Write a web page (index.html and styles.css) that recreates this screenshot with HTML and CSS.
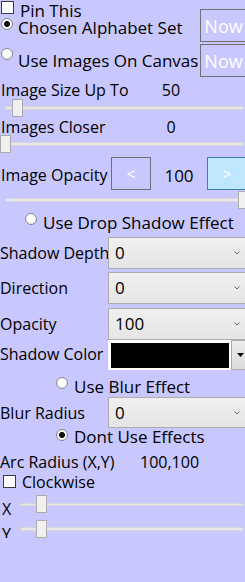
FILE: index.html
```html
<!DOCTYPE html>
<html lang="en">
<head>
    <meta charset="UTF-8">
    <meta name="viewport" content="width=device-width, initial-scale=1.0">
    <title>Effects Panel</title>
    <link rel="stylesheet" href="styles.css">
</head>
<body>
    <div class="panel">
        <div class="top">
            <div class="choices">
                <div class="pin"><span class="box"></span><span class="text">Pin This</span></div>
                <div class="option first"><span class="radio on"></span><span class="text">Chosen Alphabet Set</span></div>
                <div class="option second"><span class="radio"></span><span class="text">Use Images On Canvas</span></div>
            </div>
            <div class="now-col">
                <button class="now">Now</button>
                <button class="now">Now</button>
            </div>
        </div>

        <div class="readout first-readout"><span class="name">Image Size Up To</span><span class="value">50</span></div>
        <div class="slider"><div class="track"></div><div class="thumb" style="left: 12px"></div></div>

        <div class="readout"><span class="name">Images Closer</span><span class="value">0</span></div>
        <div class="slider"><div class="track"></div><div class="thumb" style="left: 0px"></div></div>

        <div class="stepper">
            <span class="name">Image Opacity</span>
            <button class="step">&lt;</button>
            <span class="value">100</span>
            <button class="step active">&gt;</button>
        </div>
        <div class="slider"><div class="track"></div><div class="thumb" style="left: 238px"></div></div>

        <div class="effect shadow-effect"><span class="radio"></span><span class="text">Use Drop Shadow Effect</span></div>

        <div class="field"><span class="name">Shadow Depth</span><div class="select"><span>0</span><svg width="6" height="4" viewBox="0 0 6 4"><polyline points="0.5,0.5 3,3 5.5,0.5" fill="none" stroke="#6a6a6a" stroke-width="1"/></svg></div></div>
        <div class="field direction"><span class="name">Direction</span><div class="select"><span>0</span><svg width="6" height="4" viewBox="0 0 6 4"><polyline points="0.5,0.5 3,3 5.5,0.5" fill="none" stroke="#6a6a6a" stroke-width="1"/></svg></div></div>
        <div class="field opacity"><span class="name">Opacity</span><div class="select"><span>100</span><svg width="6" height="4" viewBox="0 0 6 4"><polyline points="0.5,0.5 3,3 5.5,0.5" fill="none" stroke="#6a6a6a" stroke-width="1"/></svg></div></div>
        <div class="field color-field">
            <span class="name">Shadow Color</span>
            <div class="color-pick">
                <div class="swatch"></div>
                <div class="drop"><svg width="7" height="4" viewBox="0 0 7 4"><polygon points="0,0 7,0 3.5,4" fill="#000"/></svg></div>
            </div>
        </div>

        <div class="effect blur-effect"><span class="radio"></span><span class="text">Use Blur Effect</span></div>

        <div class="field blur"><span class="name">Blur Radius</span><div class="select"><span>0</span><svg width="6" height="4" viewBox="0 0 6 4"><polyline points="0.5,0.5 3,3 5.5,0.5" fill="none" stroke="#6a6a6a" stroke-width="1"/></svg></div></div>

        <div class="effect none-effect"><span class="radio on"></span><span class="text">Dont Use Effects</span></div>

        <div class="arc"><span class="name">Arc Radius (X,Y)</span><span>100,100</span></div>
        <div class="clockwise"><span class="box"></span><span>Clockwise</span></div>

        <div class="axis x-axis"><span class="axis-name">X</span><div class="axis-slider"><div class="track"></div><div class="thumb" style="left: 16px"></div></div></div>
        <div class="axis y-axis"><span class="axis-name">Y</span><div class="axis-slider"><div class="track"></div><div class="thumb" style="left: 16px"></div></div></div>
    </div>
</body>
</html>
```

FILE: styles.css
```css
* {
    box-sizing: border-box;
}
body {
    margin: 0;
    background: #c8c8ff;
    font-family: "Open Sans", sans-serif;
    font-size: 16px;
    line-height: 20px;
    color: #000;
    overflow: hidden;
}
.panel {
    width: 250px;
}
.top {
    display: flex;
    height: 78px;
}
.choices {
    width: 200px;
    white-space: nowrap;
}
.text {
    font-size: 17px;
}
.pin {
    display: flex;
    height: 19px;
    padding: 1px 0 0 1px;
}
.pin .text {
    line-height: 17px;
    margin-top: 1px;
}
.box {
    width: 13px;
    height: 13px;
    border: 1px solid #3a3a3a;
    background: #fff;
    flex-shrink: 0;
}
.pin .box {
    margin-right: 6px;
}
.radio {
    width: 12px;
    height: 12px;
    border-radius: 50%;
    border: 1px solid #8a8a8a;
    background: radial-gradient(circle at 50% 40%, #fff 40%, #e4e4e4);
    flex-shrink: 0;
}
.radio.on {
    background: radial-gradient(circle, #111 0 2.6px, #fff 3.4px, #fff 45%, #e4e4e4);
}
.option {
    display: flex;
    padding-left: 1px;
}
.option .radio {
    margin-right: 5px;
}
.option.first {
    height: 30px;
    margin-top: -1px;
}
.option.first .text {
    line-height: 17px;
    margin-top: 1px;
}
.option.second {
    height: 30px;
}
.option.second .text {
    padding-top: 3px;
}
.now-col {
    width: 50px;
    padding-top: 9px;
}
.now {
    display: block;
    width: 47px;
    height: 33px;
    margin: 0 0 2px 0;
    padding: 0;
    border: 1px solid #707070;
    background: transparent;
    color: #fff;
    font-family: inherit;
    font-size: 18px;
    text-align: center;
}
.readout {
    display: flex;
    height: 18px;
    padding-left: 1px;
}
.readout.first-readout {
    height: 21px;
    padding-top: 2px;
}
.readout .name {
    width: 150px;
}
.value {
    width: 40px;
    text-align: center;
}
.slider {
    position: relative;
    height: 18px;
}
.track {
    position: absolute;
    left: 5px;
    right: 6px;
    top: 7px;
    height: 4px;
    background: #e7e7e7;
    border: 1px solid #d6d6d6;
}
.thumb {
    position: absolute;
    top: 0;
    width: 11px;
    height: 18px;
    background: #f0f0f0;
    border: 1px solid #acacac;
}
.stepper {
    display: flex;
    align-items: flex-start;
    height: 38px;
    padding-left: 1px;
}
.stepper .name {
    width: 110px;
    padding-top: 12px;
    white-space: nowrap;
}
.stepper .value {
    width: 56px;
    padding-top: 13px;
    font-size: 17px;
}
.step {
    width: 40px;
    height: 33px;
    margin-top: 4px;
    padding: 0;
    border: 1px solid #707070;
    background: transparent;
    color: #fff;
    font-family: inherit;
    font-size: 16px;
}
.step.active {
    background: #bee6fd;
    border-color: #3c7fb1;
}
.effect {
    display: flex;
    white-space: nowrap;
}
.effect .radio {
    margin-right: 6px;
}
.shadow-effect {
    height: 28px;
    padding: 4px 0 0 25px;
}
.blur-effect {
    height: 27px;
    padding: 7px 0 0 56px;
}
.none-effect {
    height: 20px;
    padding-left: 56px;
}
.none-effect .radio {
    margin-top: 1px;
}
.none-effect .text {
    margin-top: -1px;
}
.field {
    display: flex;
    align-items: center;
    height: 32px;
}
.field .name {
    width: 108px;
    white-space: nowrap;
}
.field.direction {
    margin-top: 3px;
}
.field.opacity {
    margin-top: 4px;
}
.field.blur {
    height: 31px;
}
.select {
    width: 142px;
    height: 100%;
    display: flex;
    align-items: center;
    justify-content: space-between;
    padding: 0 9px 0 6px;
    border: 1px solid #acacac;
    background: linear-gradient(#f0f0f0, #e5e5e5);
    font-size: 17px;
}
.color-field {
    height: 30px;
    align-items: flex-start;
}
.color-field .name {
    padding-top: 4px;
}
.color-pick {
    display: flex;
    width: 142px;
    height: 30px;
}
.swatch {
    width: 123px;
    background: #000;
    border-style: solid;
    border-color: #fff;
    border-width: 3px 2px 2px 3px;
}
.drop {
    width: 19px;
    display: flex;
    align-items: center;
    justify-content: center;
    border: 1px solid #acacac;
    background: linear-gradient(#ececec, #dcdcdc);
}
.arc {
    display: flex;
    height: 24px;
    padding-top: 4px;
}
.arc .name {
    width: 140px;
}
.clockwise {
    display: flex;
    height: 23px;
    padding-left: 3px;
}
.clockwise .box {
    margin: 3px 6px 0 0;
}
.axis {
    display: flex;
    height: 18px;
}
.y-axis {
    margin-top: 7px;
}
.axis-name {
    width: 20px;
    padding: 4px 0 0 2px;
}
.axis-slider {
    position: relative;
    flex: 1;
}
.axis-slider .track {
    left: 0;
    right: 6px;
    top: 8px;
    height: 3px;
}
.y-axis .axis-slider .track {
    top: 7px;
    height: 4px;
}
```
